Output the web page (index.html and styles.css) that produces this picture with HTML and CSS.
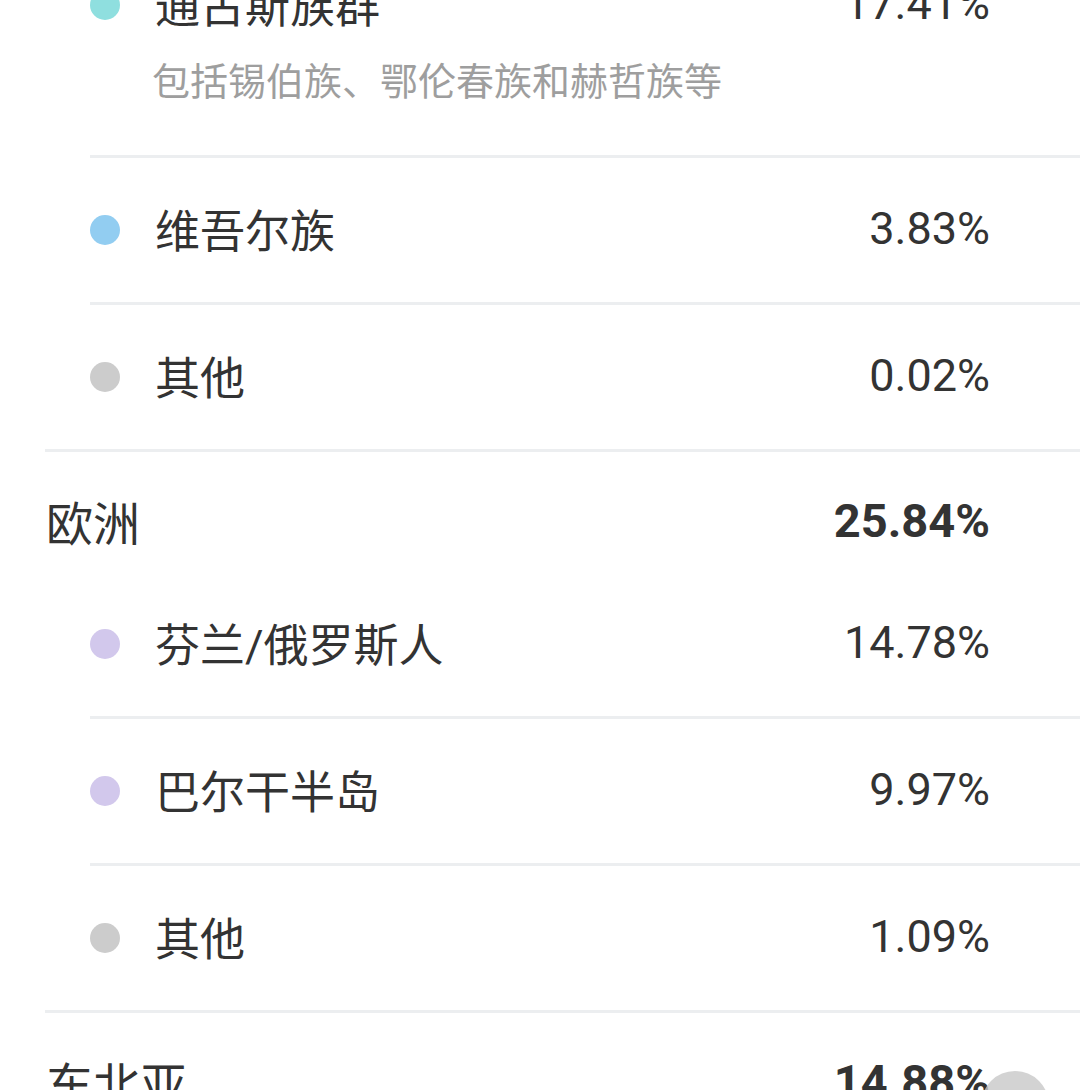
FILE: index.html
```html
<!DOCTYPE html>
<html lang="zh-CN">
<head>
<meta charset="utf-8">
<link rel="stylesheet" href="styles.css">
</head>
<body>
<div class="page">
  <section class="section">
    <div class="rows">
      <div class="row has-sub">
        <div class="row-main">
          <span class="dot teal"></span>
          <span class="name">通古斯族群</span>
          <span class="pct">17.41%</span>
        </div>
        <div class="sub">包括锡伯族、鄂伦春族和赫哲族等</div>
      </div>
      <div class="row">
        <div class="row-main">
          <span class="dot blue"></span>
          <span class="name">维吾尔族</span>
          <span class="pct">3.83%</span>
        </div>
      </div>
      <div class="row last">
        <div class="row-main">
          <span class="dot grey"></span>
          <span class="name">其他</span>
          <span class="pct">0.02%</span>
        </div>
      </div>
    </div>
  </section>

  <section class="section">
    <div class="sec-head">
      <span class="sec-name">欧洲</span>
      <span class="sec-pct">25.84%</span>
    </div>
    <div class="rows">
      <div class="row">
        <div class="row-main">
          <span class="dot lilac"></span>
          <span class="name">芬兰/俄罗斯人</span>
          <span class="pct">14.78%</span>
        </div>
      </div>
      <div class="row">
        <div class="row-main">
          <span class="dot lilac"></span>
          <span class="name">巴尔干半岛</span>
          <span class="pct">9.97%</span>
        </div>
      </div>
      <div class="row last">
        <div class="row-main">
          <span class="dot grey"></span>
          <span class="name">其他</span>
          <span class="pct">1.09%</span>
        </div>
      </div>
    </div>
  </section>

  <section class="section">
    <div class="sec-head">
      <span class="sec-name">东北亚</span>
      <span class="sec-pct">14.88%</span>
    </div>
  </section>
</div>
<div class="fab" aria-hidden="true"></div>
</body>
</html>
```

FILE: styles.css
```css
html, body {
  margin: 0;
  padding: 0;
  background: #ffffff;
}

body {
  width: 1080px;
  height: 1090px;
  overflow: hidden;
  position: relative;
  font-family: Roboto, "Noto Sans CJK SC", sans-serif;
  color: #333333;
}

.page {
  margin-top: -67px;
}

.section {
  margin-left: 45px;
  border-bottom: 3px solid #eceef0;
}

.sec-head {
  display: flex;
  align-items: center;
  height: 58px;
  padding: 41px 90px 21px 0;
  font-size: 47px;
}

.sec-name {
  margin-left: 1px;
  margin-bottom: 4px;
}

.sec-pct {
  margin-left: auto;
  margin-bottom: 4px;
  font-weight: 700;
  font-size: 47px;
}

.rows {
  margin-left: 45px;
}

.row {
  padding: 43px 90px 43px 0;
  border-bottom: 3px solid #eceef0;
}

.row.last {
  border-bottom: none;
}

.row.has-sub {
  padding-bottom: 48px;
}

.row-main {
  display: flex;
  align-items: center;
  height: 58px;
  font-size: 45px;
}

.name {
  margin-bottom: 4px;
}

.dot {
  flex: none;
  width: 30px;
  height: 30px;
  border-radius: 50%;
  margin-right: 35px;
}

.teal { background: #8fdfdf; }
.blue { background: #92cdf1; }
.grey { background: #cccccc; }
.lilac { background: #d2c8ec; }

.pct {
  margin-left: auto;
  margin-bottom: 4px;
}

.sub {
  margin-top: 23px;
  padding-left: 62px;
  line-height: 50px;
  font-size: 38px;
  color: #9e9e9e;
}

.fab {
  position: absolute;
  left: 981px;
  top: 1071px;
  width: 68px;
  height: 68px;
  border-radius: 50%;
  background: rgba(200, 200, 200, 0.8);
}
```
